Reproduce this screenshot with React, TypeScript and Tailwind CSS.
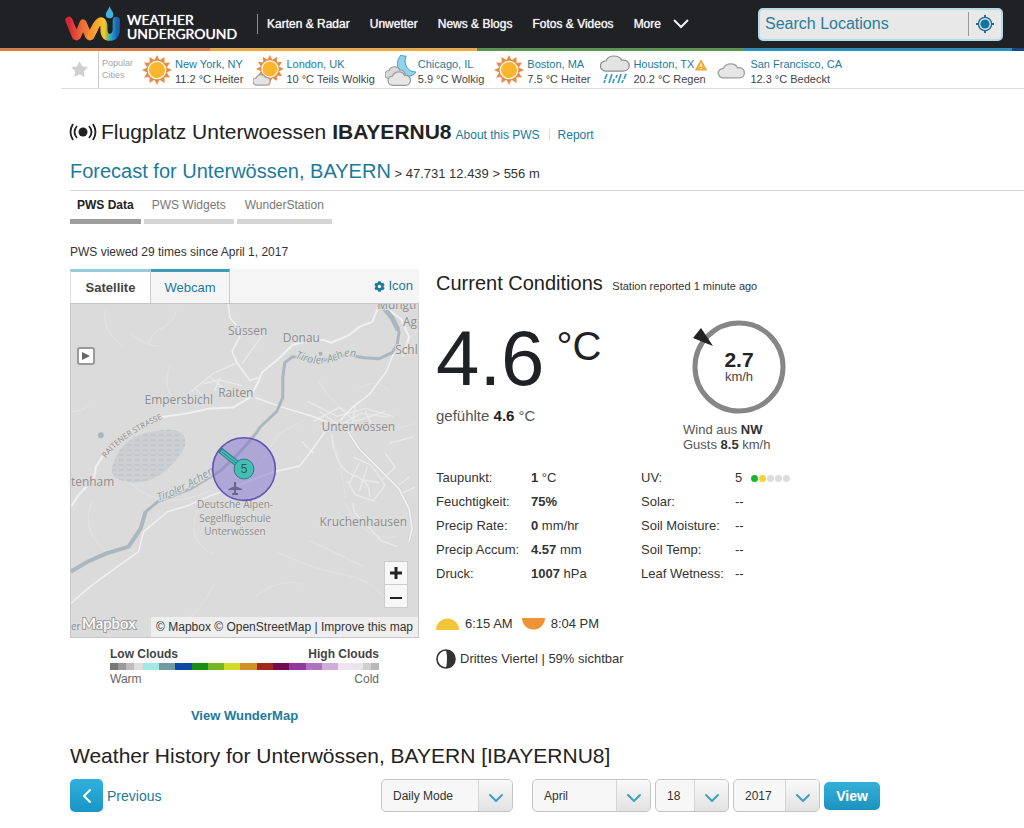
import { Star, ChevronDown, ChevronLeft } from "lucide-react";
import { FaCog } from "react-icons/fa";

const link = "text-[#1b7a9c] hover:underline";

const navItems = ["Karten & Radar", "Unwetter", "News & Blogs", "Fotos & Videos"];

type IconName = "sun" | "partly" | "night" | "rain" | "cloud";

const cities: { name: string; temp: string; icon: IconName; alert?: boolean }[] = [
  { name: "New York, NY", temp: "11.2 °C Heiter", icon: "sun" },
  { name: "London, UK", temp: "10 °C Teils Wolkig", icon: "partly" },
  { name: "Chicago, IL", temp: "5.9 °C Wolkig", icon: "night" },
  { name: "Boston, MA", temp: "7.5 °C Heiter", icon: "sun" },
  { name: "Houston, TX", temp: "20.2 °C Regen", icon: "rain", alert: true },
  { name: "San Francisco, CA", temp: "12.3 °C Bedeckt", icon: "cloud" },
];

const leftRows = [
  { label: "Taupunkt:", value: "1", unit: "°C" },
  { label: "Feuchtigkeit:", value: "75%", unit: "" },
  { label: "Precip Rate:", value: "0", unit: "mm/hr" },
  { label: "Precip Accum:", value: "4.57", unit: "mm" },
  { label: "Druck:", value: "1007", unit: "hPa" },
];

const rightRows = ["Solar:", "Soil Moisture:", "Soil Temp:", "Leaf Wetness:"];

const uvDots = ["bg-[#1db52b]", "bg-[#f2d531]", "bg-[#dcdcdc]", "bg-[#dcdcdc]", "bg-[#dcdcdc]"];

// cloud height scale, warm to cold
const scale = [
  "grow bg-[#777777]",
  "grow bg-[#9a9a9a]",
  "grow bg-[#bdbdbd]",
  "grow bg-[#dedede]",
  "grow-2 bg-[#a5e6e6]",
  "grow-2 bg-[#729b9f]",
  "grow-2 bg-[#1148a8]",
  "grow-2 bg-[#178f17]",
  "grow-2 bg-[#77b722]",
  "grow-2 bg-[#d2dd2a]",
  "grow-2 bg-[#cf9128]",
  "grow-2 bg-[#a3261e]",
  "grow-2 bg-[#740a4f]",
  "grow-2 bg-[#8f3a9c]",
  "grow-2 bg-[#ae74bd]",
  "grow-2 bg-[#cfaed9]",
  "grow-2 bg-[#efe3f3]",
  "grow bg-[#e6e6e6]",
  "grow bg-[#cfcfcf]",
  "grow bg-[#b8b8b8]",
];

const rays =
  "M15 0l2.6 5.2L22.500 2l0 5.700L28 7.500l-3.200 4.900L30 15l-5.200 2.600L28 22.500l-5.500-.2L22.500 28l-4.900-3.200L15 30l-2.600-5.200L7.500 28l0-5.700L2 22.500l3.200-4.900L0 15l5.200-2.600L2 7.500l5.500.2L7.500 2l4.900 3.200z";
const cloudPath =
  "M7 17a5.500 5.500 0 0 1-.5-11C8 2.500 11 1 14 1c3.500 0 6 1.800 7 4.500 3.500-.8 7 1.500 7 5.500 0 3.500-2.500 6-6 6z";

function WeatherIcon({ name }: { name: IconName }) {
  return (
    <svg viewBox="0 0 31 31" className="size-[31px] shrink-0" aria-hidden="true">
      {(name === "sun" || name === "partly") && (
        <g transform={name === "partly" ? "translate(3 0) scale(.93)" : undefined}>
          <path d={rays} fill="#ea8b45" />
          <circle cx="15" cy="15" r="8.700" fill="#fbb62d" stroke="#fff" strokeWidth="1.300" />
        </g>
      )}
      {name === "partly" && (
        <path d={cloudPath} transform="translate(-1 19) scale(.65)" fill="#e3e3e3" stroke="#a2a2a2" strokeWidth="2" />
      )}
      {name === "night" && (
        <>
          <path d="M16 0c-7 8-3 20 6 21 4 .5 7-1 9-4-8 0-13-7-10-16-2 0-4 0-5-1z" fill="#92d3ee" stroke="#3c9dc6" />
          <path d={cloudPath} transform="translate(-1 11) scale(.75)" fill="#d9d9d9" stroke="#9a9a9a" strokeWidth="1.500" />
          <path d={cloudPath} transform="translate(2 16) scale(.84)" fill="#e6e6e6" stroke="#9a9a9a" strokeWidth="1.500" />
        </>
      )}
      {name === "rain" && (
        <>
          <path d={cloudPath} transform="translate(-1 0) scale(1.080 .95)" fill="#e3e3e3" stroke="#8d8d8d" strokeWidth="1.200" />
          <path
            d="M7 19l-2 5M5 25l-1 3M12 19l-3 9M17 20l-1 3M14 24l-1 4M21 19l-3 9M26 19l-2 5M23 25l-1 3"
            stroke="#3f9fc0"
            strokeWidth="1.800"
          />
        </>
      )}
      {name === "cloud" && (
        <path d={cloudPath} transform="translate(0 8) scale(.98 .88)" fill="#e6e6e6" stroke="#9f9f9f" strokeWidth="1.400" />
      )}
    </svg>
  );
}

function Logo() {
  return (
    <svg viewBox="0 0 58 38" className="h-9 w-[57px]" aria-hidden="true">
      <defs>
        <linearGradient id="w" x1="0" x2="1">
          <stop offset="0" stopColor="#d7263a" />
          <stop offset=".5" stopColor="#ee6a35" />
          <stop offset="1" stopColor="#f4913a" />
        </linearGradient>
        <linearGradient id="u" gradientUnits="userSpaceOnUse" x1="27" x2="54" y1="0" y2="0">
          <stop offset="0" stopColor="#f6952f" />
          <stop offset=".5" stopColor="#f9c62e" />
          <stop offset=".6" stopColor="#8cc152" />
          <stop offset=".75" stopColor="#2ba7d6" />
          <stop offset="1" stopColor="#1763ae" />
        </linearGradient>
      </defs>
      <g fill="none" strokeWidth="7.500" strokeLinecap="round" strokeLinejoin="round">
        <path d="M3 15l7 17q1 1 2 0l6-14 6 14q1 1 2 0l4-8" stroke="url(#w)" />
        <path d="M26 32l6-12q6-9 8 0v4q0 9 6 9 7 0 7-9v-9" stroke="url(#u)" />
      </g>
      <path d="M46 0c1 4 4 6 4 9a4 4 0 0 1-8 0c0-3 3-5 4-9z" fill="#45b1df" />
    </svg>
  );
}

function Header() {
  return (
    <header>
      <div className="flex h-12 items-center bg-[#1f2125] pr-[21px] pl-[65px] text-[#f2f2f2]">
        <a href="#" className="flex items-center gap-[5px]">
          <Logo />
          <span className="flex w-[110px] flex-col pt-[6px] font-['Lato',sans-serif] text-sm leading-[14px] text-white text-shadow-[0_0_1px_#ffffff]">
            <span>WEATHER</span>
            <span>UNDERGROUND</span>
          </span>
        </a>
        <nav className="ml-5 flex items-center gap-5 border-l border-[#8b8b8b] py-[2px] pl-[9px] text-xs">
          {navItems.map((item) => (
            <a key={item} href="#" className="whitespace-nowrap text-shadow-[0_0_1px_#ffffff]">
              {item}
            </a>
          ))}
          <button className="flex items-center gap-3 text-shadow-[0_0_1px_#ffffff]">
            More
            <svg viewBox="0 0 16 10" className="h-[10px] w-4" fill="none" stroke="currentColor" strokeWidth="2">
              <path d="M1 1l7 7 7-7" />
            </svg>
          </button>
        </nav>
        <form className="ml-auto flex h-[33px] w-[245px] items-center rounded-[5px] border-2 border-[#b3dbea] bg-[#e8e8e8]">
          <input
            type="search"
            aria-label="Search Locations"
            placeholder="Search Locations"
            className="min-w-0 grow bg-transparent px-[5px] text-base text-[#1b7a9c] placeholder:text-[#2b7b98] focus:outline-none"
          />
          <button type="button" aria-label="Locate me" className="flex h-6 w-[34px] items-center justify-center border-l border-[#999999]">
            <svg viewBox="0 0 18 18" className="size-[18px]" fill="none" stroke="#17698f">
              <circle cx="9" cy="9" r="4.600" fill="#1474a0" stroke="none" />
              <circle cx="9" cy="9" r="6.600" strokeWidth="1.300" />
              <path d="M9 0v3M9 15v3M0 9h3M15 9h3" strokeWidth="1.800" />
            </svg>
          </button>
        </form>
      </div>
      <div className="flex h-[3px]">
        <div className="w-[15.6%] bg-[#d97d48]" />
        <div className="w-[4.9%] bg-[#d97d48]" />
        <div className="w-[26.1%] bg-[#e9a94b]" />
        <div className="w-[26.1%] bg-[#5e9250]" />
        <div className="w-[26.1%] bg-[#2e8fbd]" />
        <div className="grow bg-[#154a86]" />
      </div>
    </header>
  );
}

function CityBar() {
  return (
    <div className="ml-[61px] flex h-[38px] border-b border-[#dddddd]">
      <button aria-label="Favorites" className="flex w-[38px] items-center justify-center border-r border-[#cccccc]">
        <Star size={19} fill="#cfcfcf" stroke="none" />
      </button>
      <p className="w-[43px] pt-[6px] pl-[3px] text-[9px] leading-3 text-[#a5a5a5]">
        Popular
        <br />
        Cities
      </p>
      <ul className="flex gap-[10px] pt-1">
        {cities.map((city) => (
          <li key={city.name} className="flex gap-[2px] text-[11px] leading-[15px] whitespace-nowrap">
            <WeatherIcon name={city.icon} />
            <div className="pt-[2px]">
              <a href="#" className={`flex items-center gap-[1px] ${link}`}>
                {city.name}
                {city.alert && (
                  <svg viewBox="0 0 12 12" className="size-3">
                    <path d="M6 1l5.500 10h-11z" fill="#f3b13c" stroke="#eda634" strokeLinejoin="round" />
                    <path d="M6 4.500v3.500M6 9v1" stroke="#fff" strokeWidth="1.200" />
                  </svg>
                )}
              </a>
              <p className="text-[#444444]">{city.temp}</p>
            </div>
          </li>
        ))}
      </ul>
    </div>
  );
}

function StationMap() {
  return (
    <svg viewBox="0 0 349 335" className="block w-full" fontFamily="'Open Sans', sans-serif">
      <defs>
        <path id="strasse" d="M35 155Q52 132 100 112" />
        <path id="river-n" d="M225 54Q252 66 272 54Q285 50 305 60" />
        <path id="river-s" d="M88 198Q116 190 165 156" />
        <pattern id="airfield" width="8" height="5" patternUnits="userSpaceOnUse">
          <path d="M0 2h5" stroke="#b9bec3" strokeWidth="1" />
        </pattern>
      </defs>
      <rect width="349" height="335" fill="#dbdbdb" />
      <path d="M43 160q-7 14 10 18 22 6 42-10 20-20 20-28 0-16-24-13-40 4-48 33z" fill="#cdcfd0" />
      <path d="M43 160q-7 14 10 18 22 6 42-10 20-20 20-28 0-16-24-13-40 4-48 33z" fill="url(#airfield)" />

      {/* tracks */}
      <g fill="none" stroke="#e3e3e3" strokeWidth="1">
        <path d="M106 6q-4 14-14 18T78 40M60 30q20 14 28 12M100 60q-10 30 10 40M0 108q12 0 18-6M35 5q-6 20 18 38" />
        <path d="M22 196q-14 30 14 54M130 200q-18 38 14 52M208 250q40 18 66 22t40 22M240 238q30 14 54 26M186 294q24-20 50-12" />
        <path d="M100 330q30-18 44-48M262 130q12 40 14 66M276 200q18 40 52 34M290 84q20-10 30 4M300 120q18 10 48 0" />
        <path d="M330 20q-6 18 12 34M339 36l10-10M248 76q18 30 36 34M60 180q30 30 80 8M190 160l20-30 26-14" />
      </g>
      {/* village streets */}
      <g fill="none" stroke="#eaeaea" strokeWidth="1.300">
        <path d="M238 98l30 15 28-8 28 8M244 118l26-14 16 14 30-10M250 108l22 16M262 126l30-16 28 4M286 102l-4 28M296 108l8 16M250 123l26-4 40 6" />
        <path d="M262 132q4 34 22 40t16 22M284 154l18 8 14 20-12 16-18-6-8-14M290 160l-10 20M298 164l-8 24M310 180l-20-4M316 150l10 14-12 12M320 140l24-6" />
        <path d="M284 200q-2 10 10 18l18 20 16 6M330 182l10-8M334 190l12-6M232 138l12 12" />
        <path d="M167 59l-24 11-22 18M140 74l18 14M134 80l14-4 24 6M126 86l6 6M172 60l20-28M150 74l-6 14" />
      </g>
      <g fill="none" stroke="#c9c9c9" strokeWidth="3" strokeLinejoin="round">
        <path d="M277 126l13 20 20 20 20 20 10 20 3 20-3 13" />
      </g>
      {/* roads */}
      <g fill="none" stroke="#f1f1f1" strokeWidth="2" strokeLinejoin="round">
        <path d="M0 204l7-11 16-17 2-12 8-13 20-20 37-17 27-4 23-5 23-1 17-10 7-13 5-12 18-15 13-13 14-3 16-2 9 3 18-8 10-8 13-5 7-17" />
        <path d="M277 126l13 20 20 20 20 20 10 20 3 20-3 13M312 1l20 14 8 18-6 20" />
        <path
          d="M0 301l17-15 23-17 28-20 5-20 24-20 20-6 23-10 63-24 27-6 13-17 14-20 13-8 13-14 17-13 17-23 10-24M158 0l2 14 12 14-10 20 5 11 13 18 8-3M185 94l28 10 30 9 34 13"
          strokeWidth="1.500"
        />
      </g>
      {/* river */}
      <g fill="none" stroke="#abb6be" strokeLinejoin="round">
        <path
          d="M312 1l11 13 7 14-2 13-5 8-13 6-15-1-18-3-24 6-30-4-8 6-2 15v20l-6 14-17 16-3 5-17 20-20 19-30 18-33 13-12 10-5 17-12 18-23 7-18 8-17 10"
          strokeWidth="3"
        />
        <path d="M75 209l-5 17-12 18-23 7-18 8-17 10" strokeWidth="4" />
        <path d="M312 1l11 13 6 12" strokeWidth="5" />
      </g>
      <circle cx="30" cy="132" r="3" fill="#aab4bb" />
      <circle cx="251" cy="50" r="2" fill="#a8b3ad" />

      <g fill="#8d8d8d" stroke="#dedede" strokeWidth="2" paintOrder="stroke" fontSize="12">
        <text x="158" y="31">Süssen</text>
        <text x="213" y="38">Donau</text>
        <text x="74" y="101">Empersbichl</text>
        <text x="148" y="94">Raiten</text>
        <text x="252" y="128">Unterwössen</text>
        <text x="250" y="223">Kruchenhausen</text>
        <text x="0" y="183">tenham</text>
        <text x="334" y="22">Ag</text>
        <text x="326" y="50">Schl</text>
        <text x="308" y="5">Mungth</text>
        <text x="0" y="328" fontSize="10">er</text>
        <g fontSize="10" textAnchor="middle">
          <text x="165" y="205">Deutsche Alpen-</text>
          <text x="165" y="219">Segelflugschule</text>
          <text x="165" y="232">Unterwössen</text>
        </g>
        <g fontSize="8">
          <text>
            <textPath href="#strasse">RAITENER STRASSE</textPath>
          </text>
        </g>
        <g fontSize="11" fontStyle="italic" fill="#8ea09a">
          <text>
            <textPath href="#river-n">Tiroler Achen</textPath>
          </text>
          <text>
            <textPath href="#river-s">Tiroler Achen</textPath>
          </text>
        </g>
      </g>

      {/* station marker with wind barb */}
      <circle cx="174" cy="166" r="31.500" fill="#8173cf" fillOpacity=".5" stroke="#6153b5" strokeWidth="1.600" />
      <path d="M165 179v12M162 191h6" stroke="#6a6690" strokeWidth="2" />
      <path d="M158 186l7-3 7 3v1h-14z" fill="#6a6690" />
      <path d="M150 147l24 19" stroke="#2b7a84" strokeWidth="6" />
      <path d="M151 148l23 18" stroke="#45bfb8" strokeWidth="4" />
      <path d="M152 149l14 11" stroke="#2b7a84" strokeWidth="1" />
      <circle cx="174" cy="166" r="10" fill="#45bfb3" stroke="#2b7a84" />
      <text x="174" y="170" fontSize="12" textAnchor="middle" fill="#2d5a5c" fontFamily="'Liberation Sans', sans-serif">
        5
      </text>

      <text x="11" y="327" fontSize="15" fontWeight="600" fill="#ffffff" stroke="#9b9b9b" strokeWidth="2" paintOrder="stroke" fontFamily="Lato, sans-serif">
        Mapbox
      </text>
    </svg>
  );
}

function MapPanel() {
  return (
    <section className="w-[349px] shrink-0">
      <div className="flex h-[34px] bg-[#f5f5f5] text-[13px]">
        <button className="w-[81px] border-t-3 border-r border-l border-t-[#93cddc] border-r-[#cccccc] border-l-[#dddddd] bg-white font-bold text-[#444444]">
          Satellite
        </button>
        <button className="w-[79px] border-t-3 border-r border-t-[#3a9cb5] border-r-[#cccccc] text-[#1b7a9c]">Webcam</button>
        <button className="ml-auto flex items-center gap-[3px] pr-[6px] text-[#1b7a9c]">
          <FaCog size={11} />
          Icon
        </button>
      </div>
      <div className="relative border border-[#c6c6c6]">
        <StationMap />
        <button
          aria-label="Play"
          className="absolute top-[43px] left-[6px] flex size-[18px] items-center justify-center rounded-[3px] border-2 border-[#999999] bg-white"
        >
          <svg viewBox="0 0 8 8" className="size-2">
            <path d="M0 0l8 4-8 4z" fill="#666666" />
          </svg>
        </button>
        <div className="absolute right-[10px] bottom-[29px] flex flex-col gap-[1px] border border-[#cccccc] bg-[#cccccc] text-[#222222]">
          <button aria-label="Zoom in" className="flex size-[22px] items-center justify-center bg-[#f7f7f7]">
            <svg viewBox="0 0 12 12" className="size-3" stroke="currentColor" strokeWidth="3">
              <path d="M6 0v12M0 6h12" />
            </svg>
          </button>
          <button aria-label="Zoom out" className="flex size-[22px] items-center justify-center bg-[#f7f7f7]">
            <svg viewBox="0 0 12 12" className="size-3" stroke="currentColor" strokeWidth="2">
              <path d="M0 8h12" />
            </svg>
          </button>
        </div>
        <p className="absolute right-0 bottom-0 bg-[#eeeeee] px-[5px] text-xs leading-5 whitespace-nowrap text-[#333333]">
          <a href="#">© Mapbox</a> <a href="#">© OpenStreetMap</a> | <a href="#">Improve this map</a>
        </p>
      </div>

      <div className="mx-10 mt-2 text-xs leading-4 text-[#666666]">
        <div className="flex justify-between font-bold text-[#444444]">
          <span>Low Clouds</span>
          <span>High Clouds</span>
        </div>
        <div className="my-[1px] flex h-[7px]">
          {scale.map((color, i) => (
            <div key={i} className={color} />
          ))}
        </div>
        <div className="flex justify-between">
          <span>Warm</span>
          <span>Cold</span>
        </div>
      </div>
      <p className="mt-[21px] text-center text-[13px] leading-4 font-bold">
        <a href="#" className={link}>
          View WunderMap
        </a>
      </p>
    </section>
  );
}

function Conditions() {
  return (
    <section className="text-[13px] text-[#444444]">
      <h2 className="text-xl leading-7 text-[#222222]">
        Current Conditions <small className="ml-1 text-[11px] text-[#333333]">Station reported 1 minute ago</small>
      </h2>

      <div className="mt-5 flex justify-between">
        <div>
          <div className="flex items-start text-[#1f2125]">
            <span className="text-[78px] leading-[76px]">4.6</span>
            <span className="ml-3 text-[40px] leading-[52px]">°C</span>
          </div>
          <p className="mt-[10px] text-[15px] leading-5 text-[#555555]">
            gefühlte <b className="text-[#222222]">4.6</b> °C
          </p>
        </div>
        <div className="w-[108px]">
          <div className="relative ml-[9px] flex size-[94px] flex-col items-center justify-center">
            <svg viewBox="0 0 94 94" className="absolute inset-0 size-full overflow-visible">
              <circle cx="47" cy="47" r="44" fill="none" stroke="#868686" strokeWidth="5" />
              <path d="M9 8L21 26 1 18z" fill="#222222" />
            </svg>
            <b className="text-[21px] leading-5 text-[#222222]">2.7</b>
            <span className="leading-[14px]">km/h</span>
          </div>
          <p className="mt-2 leading-[15px] whitespace-nowrap text-[#555555]">
            Wind aus <b className="text-[#333333]">NW</b>
            <br />
            Gusts <b className="text-[#333333]">8.5</b> km/h
          </p>
        </div>
      </div>

      <div className="mt-[14px] flex items-start text-[#333333]">
        <table className="w-[205px] leading-6">
          <tbody>
            {leftRows.map((row) => (
              <tr key={row.label}>
                <th className="w-[95px] p-0 text-left font-normal">{row.label}</th>
                <td className="p-0">
                  <b>{row.value}</b> {row.unit}
                </td>
              </tr>
            ))}
          </tbody>
        </table>
        <table className="w-[150px] leading-6">
          <tbody>
            <tr>
              <th className="w-[95px] p-0 text-left font-normal">UV:</th>
              <td className="flex items-center p-0">
                <span className="w-4">5</span>
                {uvDots.map((dot, i) => (
                  <span key={i} className={`mr-[1px] size-[7px] shrink-0 rounded-full ${dot}`} />
                ))}
              </td>
            </tr>
            {rightRows.map((label) => (
              <tr key={label}>
                <th className="w-[95px] p-0 text-left font-normal">{label}</th>
                <td className="p-0">--</td>
              </tr>
            ))}
          </tbody>
        </table>
      </div>

      <div className="mt-7 flex items-center text-[#333333]">
        <svg viewBox="0 0 23 12" className="mr-[6px] h-3 w-[23px]">
          <path d="M0 12a11.500 11.500 0 0 1 23 0z" fill="#f3c63a" />
        </svg>
        6:15 AM
        <svg viewBox="0 0 23 12" className="mr-[6px] ml-[9px] h-3 w-[23px]">
          <path d="M0 0a11.500 11.500 0 0 0 23 0z" fill="#ee9336" />
        </svg>
        8:04 PM
      </div>
      <div className="mt-[15px] flex items-center gap-1 text-[#333333]">
        <svg viewBox="0 0 20 20" className="size-5">
          <circle cx="10" cy="10" r="9" fill="#ffffff" stroke="#333333" strokeWidth="1.600" />
          <path d="M10 1a9 9 0 0 1 0 18q2-9 0-18z" fill="#333333" />
        </svg>
        Drittes Viertel | 59% sichtbar
      </div>
    </section>
  );
}

function Select({ label, value, width }: { label: string; value: string; width: string }) {
  return (
    <div className={`relative h-[33px] overflow-hidden rounded-[5px] border border-[#c4c4c4] bg-[#f7f7f7] ${width}`}>
      <select aria-label={label} className="size-full appearance-none bg-transparent pl-[11px] text-xs text-[#333333]">
        <option>{value}</option>
      </select>
      <span className="pointer-events-none absolute inset-y-0 right-0 flex w-[34px] items-center justify-center border-l border-[#d5d5d5] bg-linear-to-b from-[#f9f9f9] to-[#e2e2e2] text-[#3f9fc0]">
        <ChevronDown size={24} className="mt-1" />
      </span>
    </div>
  );
}

function History() {
  return (
    <section className="pt-[18px]">
      <h2 className="text-[21px] leading-7 text-[#222222]">Weather History for Unterwössen, BAYERN [IBAYERNU8]</h2>
      <div className="mt-[9px] flex max-w-[810px] items-center justify-between">
        <a href="#" className={`flex items-center gap-1 text-sm ${link}`}>
          <span className="flex size-[33px] items-center justify-center rounded-[5px] bg-linear-to-b from-[#2fb1dc] to-[#1a95c4] text-white">
            <ChevronLeft size={24} />
          </span>
          Previous
        </a>
        <form className="flex items-center gap-1">
          <Select label="Mode" value="Daily Mode" width="w-[132px] mr-[15px]" />
          <Select label="Month" value="April" width="w-[119px]" />
          <Select label="Day" value="18" width="w-[74px]" />
          <Select label="Year" value="2017" width="w-[87px]" />
          <button type="button" className="h-7 w-14 rounded-[5px] bg-linear-to-b from-[#34b0d8] to-[#1b93bf] text-sm font-bold text-white">
            View
          </button>
        </form>
      </div>
    </section>
  );
}

export default function App() {
  return (
    <div className="bg-white pb-4 font-['Liberation_Sans',Arial,sans-serif] text-[#333333]">
      <Header />
      <CityBar />
      <main className="pl-[70px]">
        <div className="-ml-px flex items-baseline pt-[29px]">
          <svg viewBox="0 0 28 18" className="mr-1 h-[18px] w-7 self-center" fill="none" stroke="#222222" strokeWidth="1.800">
            <circle cx="14" cy="9" r="4.500" fill="#222222" stroke="none" />
            <path d="M8 3q-5 6 0 12M4 1q-5 8 0 16M20 3q5 6 0 12M24 1q5 8 0 16" />
          </svg>
          <h1 className="text-[21px] leading-7 text-[#222222]">
            Flugplatz Unterwoessen <b>IBAYERNU8</b>
          </h1>
          <a href="#" className={`ml-1 border-r border-[#dddddd] pr-[9px] text-xs leading-3 ${link}`}>
            About this PWS
          </a>
          <a href="#" className={`ml-2 text-xs ${link}`}>
            Report
          </a>
        </div>
        <p className="mt-[11px] border-b border-[#d5d5d5] pb-[2px] text-[13px] leading-7">
          <a href="#" className={`text-xl ${link}`}>
            Forecast for Unterwössen, BAYERN
          </a>{" "}
          &gt; 47.731 12.439 &gt; 556 m
        </p>
        <nav className="flex gap-[3px] text-xs leading-[28px] text-[#777777]">
          <a href="#" className="border-b-5 border-[#9d9d9d] px-[7px] font-bold text-[#222222]">
            PWS Data
          </a>
          <a href="#" className="border-b-5 border-[#d5d5d5] px-[8px]">
            PWS Widgets
          </a>
          <a href="#" className="border-b-5 border-[#d5d5d5] px-[8px]">
            WunderStation
          </a>
        </nav>
        <p className="mt-5 mb-[9px] text-xs">PWS viewed 29 times since April 1, 2017</p>
        <div className="flex items-start gap-[17px]">
          <MapPanel />
          <Conditions />
        </div>
        <History />
      </main>
    </div>
  );
}
